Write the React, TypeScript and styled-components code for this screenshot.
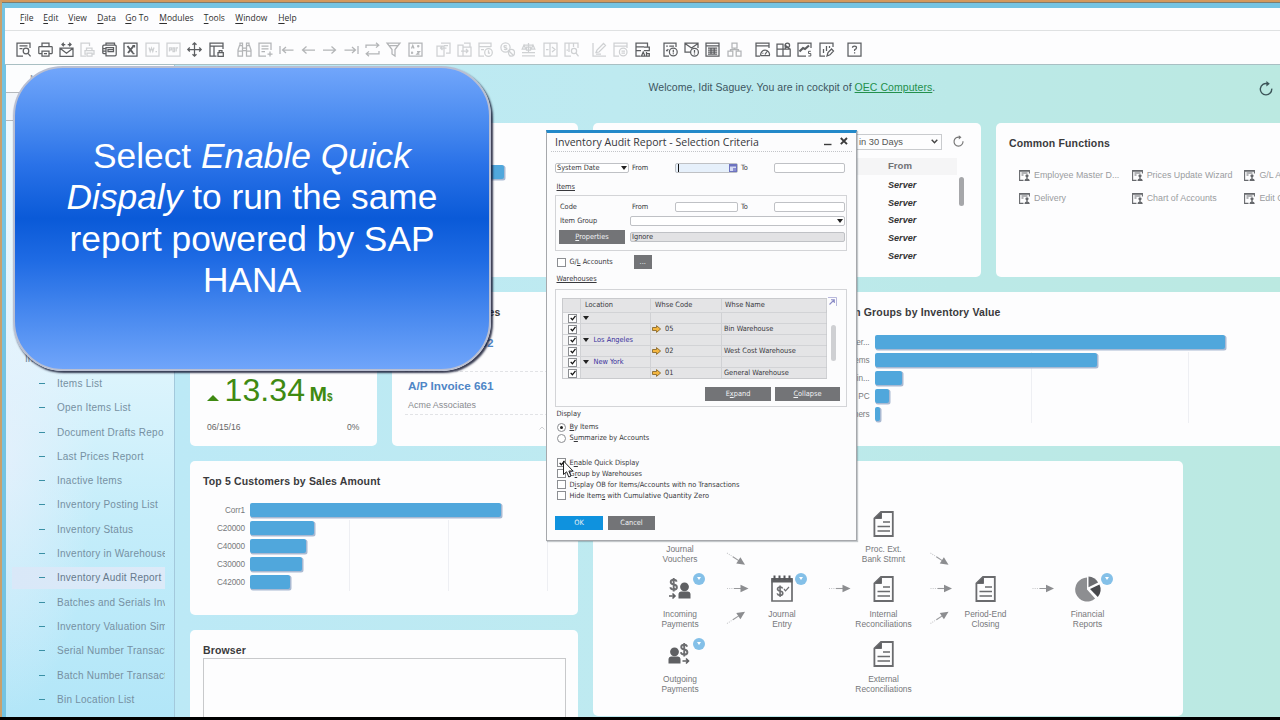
import React from "react";
import styled, { createGlobalStyle, css } from "styled-components";

const Global = createGlobalStyle`
  * { box-sizing: border-box; }
  body { margin: 0; background: #000; overflow: hidden; }
  #root { font-family: "Liberation Sans", Arial, sans-serif; }
`;

/* ---------- window frame ---------- */
const Screen = styled.div`
  position: relative; width: 1280px; height: 720px; overflow: hidden; background: #000;
`;
const OuterFrame = styled.div`
  height: 717px; border-top: 2px solid #d3985c; border-left: 2px solid #c9a06c;
`;
const InnerFrame = styled.div`
  height: 715px; border-top: 1px solid #7b7d70; background: #74c3e2;
  padding: 5px 0 0 4px; display: flex; flex-direction: column;
`;
const MenuBar = styled.nav`
  height: 23px; flex: none; background: #fdfdfe; border-bottom: 1px solid #dfe1e2;
  display: flex; align-items: center; padding-left: 15px; padding-bottom: 3px;
  margin-left: -1px;
  font: 8.5px "Open Sans", "Noto Sans", sans-serif; color: #2f2f2f;
`;
const MenuItem = styled.span<{ $w: number }>`width: ${p => p.$w}px; white-space: nowrap; flex: none; u { text-underline-offset: 1.5px; }`;
const ToolBar = styled.div`
  height: 34px; flex: none; background: #fdfdfe; border-bottom: 1px solid #a9bfc3;
  display: flex; align-items: center; padding: 4px 0 0 8px; gap: 6.5px; margin-left: -1px;
`;
const ToolGroup = styled.div`display: flex;`;
const Tool = styled.span<{ $tone: number }>`
  width: 21.4px; height: 16px; display: flex; align-items: center; justify-content: center;
  color: ${p => ["#5c5e61", "#b3b5b7", "#cfd1d3"][p.$tone]};
  svg { width: 15px; height: 15px; overflow: visible; }
`;
const Body = styled.div`flex: 1; min-height: 0; display: flex;`;

/* ---------- sidebar ---------- */
const Sidebar = styled.aside`
  width: 169px; flex: none; overflow: hidden; border-right: 1px solid #a3c9dc;
  background: radial-gradient(90px 260px at 0 390px, rgba(232,240,252,.75), transparent), linear-gradient(180deg, #f2fafe 0, #dff5fd 45%, #c4edfa 70%, #b2e6f8 100%);
`;
const SideHead = styled.div`
  height: 28px; background: #fcfdfe; border-bottom: 1px solid #b5b9bd; padding: 7px 0 0 24px;
  font-size: 9.5px; color: #8a93a3;
`;
const SideSearch = styled.div`height: 28px; background: #f3f6fa; border-bottom: 1px solid #b5b9bd;`;
const SideList = styled.div`padding: 226px 9px 0 6px;`;
const SideCategory = styled.div`
  height: 24.3px; line-height: 24.3px; padding-left: 13px; font-size: 10px; color: #6b8496;
`;
const SideItem = styled.div<{ $on?: boolean }>`
  height: 24.3px; display: flex; align-items: center; overflow: hidden; white-space: nowrap;
  font-size: 10px; letter-spacing: 0.25px; color: #7690a2;
  ${p => p.$on && css`background: linear-gradient(90deg, #d9e8f8, #dceaf8); background-size: 100% 22px; background-repeat: no-repeat; background-position: 0 1px; color: #66798c;`}
`;
const Dash = styled.span`width: 6px; height: 1px; margin: 0 12px 0 27px; flex: none; background: #3a90a5;`;

/* ---------- cockpit ---------- */
const Cockpit = styled.main`
  flex: 1; min-width: 0; overflow: hidden; padding-left: 15px;
  background: linear-gradient(90deg, #bce9f6 0, #beeaf0 40%, #bbe9e8 70%, #bbe9e1 100%);
`;
const Welcome = styled.header`
  height: 58px; display: flex; align-items: flex-start; padding: 16px 7px 0 458.5px;
  font-size: 10.5px; letter-spacing: 0.05px; line-height: 13px; color: #3c5560; white-space: nowrap;
  a { color: #23904c; text-decoration: underline; }
  svg { margin-left: auto; margin-top: 1px; width: 14px; height: 14px; color: #3d5559; overflow: visible; flex: none; }
`;
const Columns = styled.div`display: flex; gap: 15px;`;
const Column = styled.div<{ $w: number }>`width: ${p => p.$w}px; flex: none; display: flex; flex-direction: column; gap: 15px;`;
const CardRow = styled.div`display: flex; gap: 15px;`;
const Card = styled.section<{ $w: number; $h: number }>`
  width: ${p => p.$w}px; height: ${p => p.$h}px; flex: none; background: #fdfdfe; border-radius: 5px;
  padding: 14px 13px 0; overflow: hidden; position: relative;
`;
const CardTitle = styled.h2<{ $gap?: number }>`
  margin: 0 0 ${p => p.$gap ?? 0}px; font-size: 10.5px; line-height: 13px; min-height: 13px; letter-spacing: 0.15px; color: #3a3a3c; white-space: nowrap;
`;

/* ---------- bar charts ---------- */
const Chart = styled.div<{ $grid: number; $first: number }>`
  display: flex; flex-direction: column; gap: 3px; padding-bottom: 2px;
  background-image: ${p => [0, 1, 2].map(i => {
    const x = p.$first + i * p.$grid;
    return `linear-gradient(90deg, transparent ${x - 1}px, #eeeff3 ${x - 1}px, #eeeff3 ${x}px, transparent ${x}px)`;
  }).join(", ")};
  background-position: 0 18px; background-repeat: no-repeat;
`;
const BarLine = styled.div`display: flex; height: 15px; align-items: center;`;
const BarLabel = styled.span<{ $w: number }>`
  width: ${p => p.$w}px; padding: 1px 5px 0 0; text-align: right; font-size: 8.2px; letter-spacing: -0.1px; color: #77797c; white-space: nowrap;
`;
const Bar = styled.span`height: 14px; background: #50a7dc; border-radius: 2px; box-shadow: 1px 1px 0 0.5px #a9b9d2;`;

function BarChart({ label, first, grid, rows }: { label: number; first: number; grid: number; rows: [string, number][] }) {
  return (
    <Chart $first={first} $grid={grid}>
      {rows.map(([name, w], i) => (
        <BarLine key={i}>
          <BarLabel $w={label}>{name}</BarLabel>
          <Bar style={{ width: w }} />
        </BarLine>
      ))}
    </Chart>
  );
}

/* ---------- widgets ---------- */
const Kpi = styled.div`display: flex; align-items: baseline; margin: 53px 0 0 4px; height: 37px; line-height: 37px; color: #3f8a12;`;
const Up = styled.span`border: 6px solid transparent; border-top: 0; border-bottom: 6px solid #3f8a12; margin-right: 5.5px;`;
const KpiValue = styled.span`font-size: 32px; letter-spacing: 0.1px;`;
const KpiUnit = styled.b`font-size: 21px; margin-left: 4.5px;`;
const KpiCur = styled.b`font-size: 10px;`;
const KpiFoot = styled.div`display: flex; justify-content: space-between; padding: 12px 4px 0 4px; font-size: 8.6px; color: #666; line-height: 12px;`;

const Activity = styled.div`
  height: 43px; margin-right: -13px; border-bottom: 1px dashed #e2e3e6; padding: 7px 0 0 3.5px;
  b { display: block; font-size: 11.7px; line-height: 14px; color: #4f86c6; }
  small { display: block; font-size: 8.95px; line-height: 12px; margin-top: 6px; color: #8a8c90; }
`;
const MoreCaret = styled.svg`display: block; width: 6px; height: 4px; margin: 11px 0 0 134px;`;

const MsgHead = styled.div`
  display: flex; align-items: center; justify-content: flex-end; height: 15px; gap: 10.5px; margin-top: -3px; padding-right: 4.5px;
  svg { width: 11px; height: 11px; color: #777; overflow: visible; }
`;
const RangeSelect = styled.div`
  width: 120px; height: 16px; border: 1px solid #c9cbce; display: flex; align-items: center; justify-content: space-between;
  padding: 0 3px 0 36px; font-size: 9.3px; color: #555; white-space: nowrap;
  && svg { width: 7px; height: 5px; color: #444; }
`;
const MsgTable = styled.div`margin: 9px 11px 0 0; height: 110px; font-size: 9.8px; color: #333;`;
const MsgHeader = styled.div`height: 17px; line-height: 16px; background: #f5f5f6; padding-left: 282px; color: #717275; font-weight: bold; font-size: 9.6px;`;
const MsgRow = styled.div`height: 17.7px; line-height: 17.7px; padding: 2px 0 0 282px; font-weight: bold; font-style: italic; font-size: 9.1px;`;
const Thumb = styled.div<{ $x: number; $y: number; $w: number; $h: number; $c: string }>`
  position: absolute; left: ${p => p.$x}px; top: ${p => p.$y}px; width: ${p => p.$w}px; height: ${p => p.$h}px;
  border-radius: 3px; background: ${p => p.$c};
`;

const FnGrid = styled.div`display: grid; grid-template-columns: repeat(3, 112.7px); row-gap: 11px; padding-left: 10px; width: 360px;`;
const Fn = styled.div`
  height: 12px; display: flex; align-items: center; gap: 4px; font-size: 8.9px; color: #9a9ca0; white-space: nowrap;
  svg { width: 11px; height: 11px; flex: none; color: #66686c; margin-top: 2px; }
`;

const BrowserBox = styled.div`width: 363px; height: 90px; margin-top: 1px; border: 1px solid #c8c9cb;`;

/* ---------- process map ---------- */
const Node = styled.div<{ $x: number; $y: number }>`
  position: absolute; left: ${p => p.$x - 593 - 40}px; top: ${p => p.$y - 462 - 15.5}px; width: 80px;
  display: flex; flex-direction: column; align-items: center; text-align: center;
  font-size: 8.4px; line-height: 10.2px; color: #77787b;
  svg { height: 32px; width: 32px; margin-bottom: 4.5px; }
`;
const Badge = styled.span`
  position: absolute; left: 53px; top: 0; width: 12px; height: 12px; border-radius: 50%; background: #84c0e8;
  display: flex; align-items: center; justify-content: center;
  &::after { content: ""; border: 2.5px solid transparent; border-bottom: 0; border-top: 3px solid #fff; }
`;
const Links = styled.svg`position: absolute; left: 0; top: 0; width: 590px; height: 255px;`;

/* ---------- callout ---------- */
const Callout = styled.div`
  position: absolute; left: 13px; top: 66px; width: 478px; height: 305px; border-radius: 50px;
  border: 2px solid #b9bfd2; box-shadow: 1.5px 2px 2px rgba(20, 25, 50, .85);
  background: linear-gradient(180deg, #71a6fb 0, #4a8bf0 18%, #2a72e8 32%, #0a5ad8 50%, #1f6be4 64%, #4486ee 80%, #70a5fa 100%);
  display: flex; align-items: center; justify-content: center; text-align: center; padding: 0 40px 2px;
  color: #fff; font-size: 35.3px; line-height: 41.2px;
`;

/* ---------- dialog ---------- */
const Dialog = styled.div`
  position: absolute; left: 546px; top: 130px; width: 311px; height: 411px; background: #fcfcfd;
  border: 1px solid #a6a8ac; border-top: 3px solid #2389c9; box-shadow: 1px 1px 1px rgba(90,100,110,.35);
  font: 7.35px/10px "DejaVu Sans Condensed", "DejaVu Sans", sans-serif; color: #38383c;
  padding: 0 9px 0 8px; white-space: nowrap;
  u { text-underline-offset: 1px; }
`;
const DialogTitle = styled.div`
  height: 19px; margin: 0 -5px 0 -4px; padding: 0 4px 1px; border-bottom: 1px dotted #c2c4c8; display: flex; align-items: center;
  font: 10.55px "Open Sans", "Noto Sans", sans-serif; color: #36363a;
  svg { margin-left: auto; width: 24px; height: 12px; margin-right: 0; margin-top: -2px; color: #3c3c3c; }
`;
const Row = styled.div<{ $h?: number; $mt?: number }>`display: flex; align-items: center; height: ${p => p.$h ?? 10}px; margin-top: ${p => p.$mt ?? 0}px;`;
const Cell = styled.span<{ $w: number; $ml?: number }>`width: ${p => p.$w}px; margin-left: ${p => p.$ml ?? 0}px; flex: none;`;
const Input = styled.span<{ $w: number; $active?: boolean; $off?: boolean; $ml?: number }>`
  width: ${p => p.$w}px; height: 10px; margin-left: ${p => p.$ml ?? 0}px; flex: none; border: 1px solid #bfc1c5; border-radius: 2px;
  background: ${p => (p.$active ? "#e6f0fb" : p.$off ? "#e2e2e4" : "#fff")};
  display: flex; align-items: center; justify-content: space-between; line-height: 8px; padding-left: 1px;
  svg { width: 8px; height: 8px; }
`;
const Caret = styled.i`width: 1px; height: 8px; background: #111; margin-left: 1px;`;
const Down = styled.i<{ $mr?: number }>`border: 3px solid transparent; border-bottom: 0; border-top: 4px solid #222; margin-right: ${p => p.$mr ?? 1}px; flex: none;`;
const Section = styled.div<{ $mt: number }>`height: 10px; margin: ${p => p.$mt}px 0 0 1.5px;`;
const Group = styled.div<{ $h: number; $mt: number; $pad: string }>`
  height: ${p => p.$h}px; margin-top: ${p => p.$mt}px; padding: ${p => p.$pad}; border: 1px solid #d3d4d7; position: relative;
`;
const Button = styled.span<{ $w: number; $h?: number; $ml?: number; $primary?: boolean }>`
  width: ${p => p.$w}px; height: ${p => p.$h ?? 14}px; margin-left: ${p => p.$ml ?? 0}px; flex: none;
  background: ${p => (p.$primary ? "#0f92de" : "#737477")}; color: #f1f3f5;
  display: flex; align-items: center; justify-content: center; padding-bottom: 1px;
`;
const Box = styled.span<{ $ml?: number }>`
  width: 9px; height: 9px; border: 1px solid #8c8e92; background: #fff; flex: none; margin-left: ${p => p.$ml ?? 2}px;
  display: flex; align-items: center; justify-content: center;
  svg { width: 6px; height: 6px; flex: none; margin: 0; }
`;
const Radio = styled.span<{ $on?: boolean }>`
  width: 9px; height: 9px; border: 1px solid #8c8e92; border-radius: 50%; background: #fff; flex: none; margin-left: 2px;
  display: flex; align-items: center; justify-content: center;
  &::after { content: ""; width: 3px; height: 3px; border-radius: 50%; background: ${p => (p.$on ? "#222" : "transparent")}; }
`;
const Label = styled.span`margin-left: 3.5px;`;
const Grid = styled.div`width: 265px; height: 81px; border: 1px solid #c9cacd; background: #e4e4e6;`;
const GridRow = styled.div<{ $head?: boolean }>`
  display: grid; grid-template-columns: 18px 70px 71px 105px; height: ${p => (p.$head ? 13 : 11)}px;
  ${p => p.$head && css`padding-bottom: 2px;`}
  ${p => !p.$head && css`border-top: 1px solid #d2d3d6;`}
`;
const Td = styled.span<{ $pl?: number; $white?: boolean; $link?: boolean }>`
  display: flex; align-items: center; border-right: 1px solid #d0d1d4; padding-left: ${p => p.$pl ?? 0}px;
  ${p => p.$white && css`background: #f7f7f8;`}
  ${p => p.$link && css`color: #39319c;`}
`;
const CodeArrow = styled.svg`width: 9px; height: 8px; margin-right: 4px; flex: none;`;
const Corner = styled.svg`position: absolute; left: 272px; top: 7px; width: 9px; height: 9px;`;
const Cursor = styled.svg`position: absolute; left: 562px; top: 460px; width: 13px; height: 19px;`;

/* ---------- icons ---------- */
const S = { fill: "none", stroke: "currentColor", strokeWidth: 1.25 } as const;
const Ico = ({ d, children }: { d: string; children?: React.ReactNode }) => (
  <svg viewBox="0 0 15 15" {...S}><path d={d} />{children}</svg>
);
const box = "M1 1H14V14H1Z";
const Check = () => <svg viewBox="0 0 7 7"><path d="M.8 3.4L2.8 5.6L6.4 1" fill="none" stroke="#111" strokeWidth="1.5" /></svg>;
const Reload = ({ w = 1.4 }: { w?: number }) => (
  <svg viewBox="0 0 14 14" fill="none" stroke="currentColor" strokeWidth={w}>
    <path d="M8.6 1.7A5.7 5.7 0 1 0 12.7 6.6" /><path d="M7.4 -1L10.8 1.7L7.4 4.4Z" fill="currentColor" stroke="none" />
  </svg>
);
const FnIcon = () => (
  <svg viewBox="0 0 11 11" fill="none" stroke="currentColor" strokeWidth="1.1">
    <path d="M10.4 3.5V.6H.6V10.4H4.5M2.5 3H8.5M2.5 5H4.5M.6 1.2H10.4" />
    <circle cx="8" cy="5.8" r="1.6" fill="currentColor" stroke="none" /><path d="M5.4 10.9Q5.6 9 7.4 8.6V7H8.6V8.6Q10.6 9 10.8 10.9Z" fill="currentColor" stroke="none" />
  </svg>
);

const toolGroups: [number, React.ReactNode][][] = [
  [
    [0, <Ico d="M14 6V1H1V14H7M3.5 3.8H11.5M3.5 6.5H6.5"><circle cx="10" cy="9" r="2.8" /><path d="M12 11.3L14.6 14.4" /></Ico>],
    [0, <Ico d="M4 4.5V1H11V4.5M4 11.5H1.2Q.8 11.5 .8 11V5.2Q.8 4.5 1.5 4.5H13.5Q14.2 4.5 14.2 5.2V11Q14.2 11.5 13.8 11.5H11M4 9H11V14.2H4ZM6 11.5H9" />],
    [0, <Ico d="M1 6H14V14.3H1ZM1 6.2L7.5 11.2L14 6.2M3 2.5H6.3M8.7 2.5H12M4.8 .8L3 2.5L4.8 4.2M10.2 .8L12 2.5L10.2 4.2" />],
    [2, <Ico d="M6 14H1V1H9.5V4M6.5 8.5V6H12V8.5M6 12H5V8.5H14V12H12M7 11H12V14H7Z" />],
    [0, <Ico d="M4 3V1H12.5V3M3.5 11.5H1.8Q.8 11.5 .8 10.5V4.2Q.8 3.2 1.8 3.2H13.2Q14.2 3.2 14.2 4.2V12.5Q14.2 13.8 13 13.8H4V5.5H11.5V9.5H6V7.5H11.5M1 6.5H4M1 9H4" />],
    [0, <Ico d={box}><path d="M4.5 4L10 11M10.5 4L5 11" strokeWidth="2" /><path d="M9.5 3.5H11.5V5.5M9.5 11.5H11.5" /></Ico>],
    [2, <Ico d={box + "M4 5.5L5.2 9.5L6.5 6L7.8 9.5L9 5.5M10.5 9.5H12"} />],
    [2, <Ico d={box + "M3.5 9.5V5.8H5.5V7.8H3.5M7 5.8V9.5H8.5V5.8ZM10.2 9.5V5.8H12"} />],
    [0, <Ico d="M7.5 .8V14.2M.8 7.5H14.2M5.5 2.8L7.5 .8L9.5 2.8M5.5 12.2L7.5 14.2L9.5 12.2M2.8 5.5L.8 7.5L2.8 9.5M12.2 5.5L14.2 7.5L12.2 9.5" />],
    [0, <Ico d="M14 7V1H1V14H7.5M1 4H14M5 4V14M9 10.5H14.3V14.3H9ZM10.2 10.5V8.5H13V10.5" />],
  ],
  [
    [1, <Ico d="M1 8L2.5 3.5H5.5V14H1ZM14 8L12.5 3.5H9.5V14H14ZM3 3.5V1H5.5V3.5M12 3.5V1H9.5V3.5M5.5 6H9.5M5.5 8.5H9.5M1 9H5.5M9.5 9H14" />],
    [1, <Ico d="M13 8V1H1V14H8M3.5 4H10.5M3.5 6.8H10.5M3.5 9.5H7M12 9.5V14.5M9.5 12H14.5" />],
    [1, <Ico d="M1 4V12M3.5 8H14.5M7 5L3.5 8L7 11" />],
    [1, <Ico d="M1.5 8H14M5.5 4.6L1.5 8L5.5 11.4" />],
    [1, <Ico d="M1 8H13.5M9.5 4.6L13.5 8L9.5 11.4" />],
    [1, <Ico d="M14 4V12M.5 8H11.5M8 5L11.5 8L8 11" />],
    [1, <Ico d="M1 6V3.2H13.5M11 .8L13.8 3.2L11 5.6M14 9V11.8H1.5M4 9.4L1.2 11.8L4 14.2" />],
    [1, <Ico d="M1 1H14L9 7.5V14L6 12V7.5ZM3.5 3.5H11.5" />],
    [1, <Ico d={box + "M3.5 6.5L4.8 3.5L6 6.5M9 4H11.5M10.2 3V5.5M4 9.5V12M3 10.8H5.2M9 9.5H11.5L9 12H11.5"} />],
  ],
  [
    [2, <Ico d="M5 1H14V11H10M1 4H8V14H1ZM10.5 6H4.5M6.5 4L4.5 6L6.5 8M8 3.5H12" />],
    [2, <Ico d="M1 3H6V14H1ZM6 5H14V14H6ZM7 1H13V5M4 9H11M9 7L11 9L9 11" />],
    [2, <Ico d="M13 5V1H1V14H6M1 4.5H13M3 7.5H6"><circle cx="10.5" cy="10.5" r="3.8" /><path d="M10.5 8.3V11H12" /></Ico>],
    [2, <Ico d="M8 8L13.5 13.5"><circle cx="5.5" cy="5.5" r="4.6" /><ellipse cx="11.5" cy="10.8" rx="3" ry="3.4" /><path d="M7 4Q4 3 4 4.5Q4 5.5 5.5 5.5Q7 6 7 7Q5.5 8 4 7" /></Ico>],
    [2, <Ico d="M1 13.8H14M1 10.5H14M7.5 1V10M3 3H12M3 3L1.2 7H4.8ZM12 3L10.2 7H13.8ZM5.5 5H9.5V8H5.5Z" />],
    [2, <Ico d="M1 1H7V14H1ZM7 1H14V14H7ZM3 7.5H5.5M9 5L12 7.5L9 10" />],
    [2, <Ico d="M14 6V1H1V14H7M5 1V10M9.5 1V5M2.5 8H4"><circle cx="10" cy="9" r="2.6" /><path d="M12 11L14.5 14.3" /></Ico>],
  ],
  [
    [2, <Ico d="M1 1V14H14M4 10.5L5 8L11.5 1.5L13.5 3.5L7 10ZM4 12H9" />],
    [2, <Ico d="M14 6V1H1V14H6M1 4H14"><circle cx="10.2" cy="10" r="3.8" /><path d="M8.5 9H12M8.5 11H12" /></Ico>],
    [0, <Ico d="M12.5 5V1H1V14H5.5M1 4.8H9M1 8.6H6M9 5H14.3V8.6H9M6.5 14L8.2 10L10 14ZM11.5 10V14H14.3V11.5H11.5" />],
  ],
  [
    [0, <Ico d="M13 5V1H1V14H6M3.2 4.2H4.8M6.3 4.2H11M3.2 8L4 8.8L5.3 7.2"><circle cx="10.3" cy="10" r="3.9" /><path d="M10.3 7.8V10.5M10.3 11.2V12.3" /></Ico>],
    [0, <Ico d="M14 6V1H1V10H6M1 1.5L7.5 6L14 1.5"><circle cx="10.5" cy="10.3" r="3.9" /><path d="M10.5 8V10.8M10.5 11.4V12.5" /></Ico>],
    [0, <Ico d="M1 1.2H14V14H1ZM1 3.8H14M3 6.2H12.2M3 8.2H12.2M3 10.2H12.2M3 12.2H12.2M6 5.4V12.6M9.2 5.4V12.6" />],
    [1, <Ico d="M5 1H10V6H5ZM1 9.2H5.8V14H1ZM9.2 9.2H14V14H9.2ZM7.5 6V7.5M3.5 9V7.6H11.5V9" />],
  ],
  [
    [0, <Ico d="M14 6V1H1V14H5M1 3.8H14"><path d="M5.8 13.5A4.4 4.4 0 1 1 14.4 13.5ZM10 12.5L12 9.5M7.5 11L8.3 11.5" /></Ico>],
    [0, <Ico d="M1 2.2H7V14H1ZM1 7.2H14.2V14H7V7.2M9.3 7V2.5M9.3 3.2L13.6 6.8"><circle cx="11.4" cy="3.2" r="2.2" /></Ico>],
    [0, <Ico d="M14 6V1H1V14H9"><path d="M2.5 9.5L6 6L8 7L12 3.5" strokeWidth="2.2" /><path d="M13.8 9.3H11.5V11.5H13.8V14H11.3" strokeWidth="1" /></Ico>],
    [0, <Ico d="M14 5V1H1V14H6M4.5 11V7M7.5 9V4M10.5 6V4M8 14L9 10.5L12.5 7L14.5 9L11 12.8Z" />],
  ],
  [[0, <Ico d={box + "M5.5 5.8Q5.5 4 7.5 4Q9.5 4 9.5 5.7Q9.5 6.8 7.6 7.8V9M7.6 10.2V11.5"} />]],
];

const DocIcon = () => (
  <svg viewBox="0 0 32 32" fill="none" stroke="#6a6b6e" strokeWidth="1.8">
    <path d="M13 4H24.8V28H6.4V10.5Z" /><path d="M13.5 4V10.5H6.5Z" fill="#5f6063" strokeWidth="1" />
    <path d="M15 14H22M9.5 18.5H22M9.5 23H22" strokeWidth="1.7" />
  </svg>
);
const Person = ({ x }: { x: number }) => (
  <g transform={`translate(${x} 0)`} fill="#5f6063"><circle cx="6" cy="13.8" r="4.4" /><path d="M0 25.5V21.5Q0 18.6 3 18.6H9Q12 18.6 12 21.5V25.5Z" /></g>
);
const Dollar = ({ x, y, s = 1 }: { x: number; y: number; s?: number }) => (
  <path transform={`translate(${x} ${y}) scale(${s})`} fill="none" stroke="#6d6e71" strokeWidth="1.9"
    d="M7.2 3.6Q6.6 1.8 4.2 1.8Q1.2 1.8 1.2 4.1Q1.2 6 4.2 6.5Q7.4 7.1 7.4 9.2Q7.4 11.6 4.2 11.6Q1.4 11.6 .8 9.3M4.2 0V13.4" />
);
const Incoming = () => <svg viewBox="0 0 32 32"><Dollar x={5.5} y={5} /><Person x={14.5} /><path d="M5 23H11M8.5 20.5L11 23L8.5 25.5" fill="none" stroke="#5f6063" strokeWidth="1.6" /></svg>;
const Outgoing = () => <svg viewBox="0 0 32 32"><Person x={4.5} /><Dollar x={16} y={5} /><path d="M18.5 23H24.5M22 20.5L24.5 23L22 25.5" fill="none" stroke="#5f6063" strokeWidth="1.6" /></svg>;
const Journal = () => (
  <svg viewBox="0 0 32 32"><path d="M6 6H26V28H6Z" fill="none" stroke="#6a6b6e" strokeWidth="1.7" /><path d="M5.5 5H26.5V9.5H5.5Z" fill="#5f6063" />
    <path d="M8.5 2.5V7M13.5 2.5V7M18.5 2.5V7M23.5 2.5V7" stroke="#55565a" strokeWidth="2" /><Dollar x={10.5} y={12.5} s={0.85} /><path d="M18 16L19.5 17.8L23 14" fill="none" stroke="#6d6e71" strokeWidth="1.2" /></svg>
);
const Pie = () => (
  <svg viewBox="0 0 32 32"><path d="M15 4.5A12 12 0 1 0 23.1 25.5L15 16.5Z" fill="#8d8e91" /><path d="M16.5 3.5A12 12 0 0 1 26.1 9.5L16.5 14.3Z" fill="#6b6c70" /><path d="M27.5 11.5A12 12 0 0 1 25.8 24L18 16Z" fill="#47484c" /></svg>
);

const nodes: [number, number, string[], React.ReactNode, boolean][] = [
  [680, 524, ["Journal", "Vouchers"], <DocIcon />, false],
  [883.5, 524, ["Proc. Ext.", "Bank Stmnt"], <DocIcon />, false],
  [680, 589, ["Incoming", "Payments"], <Incoming />, true],
  [782, 589, ["Journal", "Entry"], <Journal />, true],
  [883.5, 589, ["Internal", "Reconciliations"], <DocIcon />, false],
  [985.5, 589, ["Period-End", "Closing"], <DocIcon />, false],
  [1087.5, 589, ["Financial", "Reports"], <Pie />, true],
  [680, 654, ["Outgoing", "Payments"], <Outgoing />, true],
  [883.5, 654, ["External", "Reconciliations"], <DocIcon />, false],
];
const arrows: [number, number, number][] = [
  [727, 554, 33], [727, 589.5, 0], [727, 624.5, -33],
  [829, 589.5, 0],
  [930.5, 554, 33], [930.5, 589.5, 0], [930.5, 624.5, -33],
  [1032.5, 589.5, 0],
];

const menus: [string, string, number][] = [
  ["F", "ile", 23.3], ["E", "dit", 25], ["V", "iew", 29], ["D", "ata", 28], ["G", "o To", 34], ["M", "odules", 44.5], ["T", "ools", 31.5], ["W", "indow", 43], ["H", "elp", 30],
];
const reports = ["Items List", "Open Items List", "Document Drafts Repo", "Last Prices Report", "Inactive Items", "Inventory Posting List", "Inventory Status", "Inventory in Warehouse", "Inventory Audit Report", "Batches and Serials Inv", "Inventory Valuation Sim", "Serial Number Transact", "Batch Number Transact", "Bin Location List"];
const functions = ["Employee Master D...", "Prices Update Wizard", "G/L Account", "Delivery", "Chart of Accounts", "Edit Chart"];
const warehouses: { loc?: string; code?: string; name?: string }[] = [
  { loc: "" }, { code: "05", name: "Bin Warehouse" }, { loc: "Los Angeles" }, { code: "02", name: "West Cost Warehouse" }, { loc: "New York" }, { code: "01", name: "General Warehouse" },
];

function SelectionDialog() {
  return (
    <Dialog>
      <DialogTitle>
        Inventory Audit Report - Selection Criteria
        <svg viewBox="0 0 24 12" fill="none" stroke="currentColor"><path d="M0 9.5H7.5" strokeWidth="1.4" /><path d="M16.8 3L23 9.2M23 3L16.8 9.2" strokeWidth="1.9" /></svg>
      </DialogTitle>
      <Row $mt={11}>
        <Input $w={74}>System Date<Down $mr={1} /></Input>
        <Cell $w={43} $ml={3}>From</Cell>
        <Input $w={63} $active><Caret /><svg viewBox="0 0 8 8"><path d="M0 0H8V8H0Z" fill="#6d73bf" /><path d="M1 2.5H7V7H1Z" fill="#d5daf4" /><path d="M4 4H7V7H4Z" fill="#8a8fd0" /></svg></Input>
        <Cell $w={33} $ml={3}>To</Cell>
        <Input $w={71} />
      </Row>
      <Section $mt={9}><u>Items</u></Section>
      <Group $h={56} $mt={3} $pad="6px 0 0 4px">
        <Row><Cell $w={72}>Code</Cell><Cell $w={43}>From</Cell><Input $w={63} /><Cell $w={33} $ml={3}>To</Cell><Input $w={71} /></Row>
        <Row $mt={4}><Cell $w={70}>Item Group</Cell><Input $w={215}><span /><Down $mr={1} /></Input></Row>
        <Row $mt={4} $h={14}><Button $w={66} $ml={-1}><span><u>P</u>roperties</span></Button><Input $w={215} $ml={5} $off>Ignore</Input></Row>
      </Group>
      <Row $mt={4} $h={14}><Box /><Label><Cell $w={65}>G/<u>L</u> Accounts</Cell></Label><Button $w={18} $ml={21}>...</Button></Row>
      <Section $mt={5}><u>Warehouses</u></Section>
      <Group $h={118} $mt={5} $pad="8px 0 0 6px">
        <Grid>
          <GridRow $head><Td /><Td $pl={4}>Location</Td><Td $pl={4}>Whse Code</Td><Td $pl={3}>Whse Name</Td></GridRow>
          {warehouses.map((w, i) => (
            <GridRow key={i}>
              <Td $white $pl={5}><Box $ml={0}><Check /></Box></Td>
              <Td $link $pl={2}>{w.loc !== undefined && <><Down $mr={4.5} />{w.loc}</>}</Td>
              <Td $pl={1}>{w.code && <><CodeArrow viewBox="0 0 9 8"><path d="M.5 2.5H4.5V.6L8.6 4L4.5 7.4V5.5H.5Z" fill="#f4b63f" stroke="#8b6a2c" strokeWidth=".9" /></CodeArrow>{w.code}</>}</Td>
              <Td $pl={2}>{w.name}</Td>
            </GridRow>
          ))}
        </Grid>
        <Corner viewBox="0 0 9 9" fill="none" stroke="#8a8bc6"><path d="M0 .5H8.5V9" strokeWidth="1" opacity=".6" /><path d="M1.5 7.5L6 3M3 2.8H6.3V6" strokeWidth="1.1" /></Corner>
        <Thumb $x={275} $y={35} $w={5} $h={36} $c="#cfd0d3" />
        <Row $mt={8} $h={14}><Button $w={66} $ml={143}><span>E<u>x</u>pand</span></Button><Button $w={65} $ml={4}><span><u>C</u>ollapse</span></Button></Row>
      </Group>
      <Section $mt={2}>Display</Section>
      <Row $mt={2.5} $h={11}><Radio $on /><Label><u>B</u>y Items</Label></Row>
      <Row $h={11}><Radio /><Label>S<u>u</u>mmarize by Accounts</Label></Row>
      <Row $mt={13.5} $h={11}><Box><Check /></Box><Label>E<u>n</u>able Quick Display</Label></Row>
      <Row $h={11}><Box /><Label>G<u>r</u>oup by Warehouses</Label></Row>
      <Row $h={11}><Box /><Label>D<u>i</u>splay OB for Items/Accounts with no Transactions</Label></Row>
      <Row $h={11}><Box /><Label>Hide Item<u>s</u> with Cumulative Quantity Zero</Label></Row>
      <Row $mt={15} $h={14}><Button $w={48} $primary>OK</Button><Button $w={47} $ml={5}>Cancel</Button></Row>
    </Dialog>
  );
}

export default function App() {
  return (
    <Screen>
      <Global />
      <OuterFrame>
        <InnerFrame>
          <MenuBar>{menus.map(([a, b, w]) => <MenuItem key={b} $w={w}><u>{a}</u>{b}</MenuItem>)}</MenuBar>
          <ToolBar>
            {toolGroups.map((g, i) => <ToolGroup key={i}>{g.map(([tone, icon], j) => <Tool key={j} $tone={tone}>{icon}</Tool>)}</ToolGroup>)}
          </ToolBar>
          <Body>
            <Sidebar>
              <SideHead>Modules</SideHead>
              <SideSearch />
              <SideList>
                <SideCategory>Inventory Reports</SideCategory>
                {reports.map(r => <SideItem key={r} $on={r === "Inventory Audit Report"}><Dash />{r}</SideItem>)}
              </SideList>
            </Sidebar>
            <Cockpit>
              <Welcome><span>Welcome, Idit Saguey. You are in cockpit of <a>OEC Computers</a>.</span><Reload /></Welcome>
              <Columns>
                <Column $w={388}>
                  <Card $w={388} $h={154}>
                    <CardTitle $gap={14} />
                    <BarChart label={47} first={147} grid={99} rows={[["", 254]]} />
                  </Card>
                  <CardRow>
                    <Card $w={186.5} $h={154}>
                      <CardTitle />
                      <Kpi><Up /><KpiValue>13.34</KpiValue><KpiUnit>M</KpiUnit><KpiCur>$</KpiCur></Kpi>
                      <KpiFoot><span>06/15/16</span><span>0%</span></KpiFoot>
                    </Card>
                    <Card $w={186.5} $h={154}>
                      <CardTitle $gap={10}>Recent A/P Entries</CardTitle>
                      <Activity><b>A/P Invoice 662</b></Activity>
                      <Activity><b>A/P Invoice 661</b><small>Acme Associates</small></Activity>
                      <MoreCaret viewBox="0 0 6 4" fill="none" stroke="#cfd0d3"><path d="M.5 3.5L3 1L5.5 3.5" /></MoreCaret>
                    </Card>
                  </CardRow>
                  <Card $w={388} $h={154}>
                    <CardTitle $gap={14}>Top 5 Customers by Sales Amount</CardTitle>
                    <BarChart label={47} first={147} grid={99} rows={[["Corr1", 251], ["C20000", 64], ["C40000", 56], ["C30000", 52], ["C42000", 40]]} />
                  </Card>
                  <Card $w={388} $h={120}>
                    <CardTitle>Browser</CardTitle>
                    <BrowserBox />
                  </Card>
                </Column>
                <Column $w={720}>
                  <CardRow>
                    <Card $w={388} $h={154}>
                      <MsgHead>
                        <RangeSelect>in 30 Days<svg viewBox="0 0 7 5" fill="none" stroke="currentColor" strokeWidth="1.4"><path d="M.7 .8L3.5 3.8L6.3 .8" /></svg></RangeSelect>
                        <Reload w={1.5} />
                      </MsgHead>
                      <MsgTable>
                        <MsgHeader>From</MsgHeader>
                        {[0, 1, 2, 3, 4].map(i => <MsgRow key={i}>Server</MsgRow>)}
                      </MsgTable>
                      <Thumb $x={366} $y={54} $w={5} $h={29} $c="#a6a7aa" />
                    </Card>
                    <Card $w={388} $h={154}>
                      <CardTitle $gap={18.5}>Common Functions</CardTitle>
                      <FnGrid>{functions.map(f => <Fn key={f}><FnIcon />{f}</Fn>)}</FnGrid>
                    </Card>
                  </CardRow>
                  <CardRow>
                    <Card $w={186.5} $h={154} />
                    <Card $w={590} $h={154}>
                      <CardTitle $gap={15}>Top 5 Item Groups by Inventory Value</CardTitle>
                      <BarChart label={67} first={224} grid={157} rows={[["Printer...", 350.5], ["Items", 222.5], ["Main...", 27.5], ["PC", 14.5], ["Others", 5]]} />
                    </Card>
                  </CardRow>
                  <Card $w={590} $h={255}>
                    <Links viewBox="593 462 590 255" fill="none">
                      {arrows.map(([x, y, a], i) => (
                        <g key={i} transform={`translate(${x} ${y}) rotate(${a})`}>
                          <path d="M0 0H7" stroke="#c3c4c7" strokeDasharray="1 1.2" strokeWidth="1" />
                          <path d="M7 0H14" stroke="#98999c" strokeWidth="1.1" /><path d="M13.5 -3.8L21.5 0L13.5 3.8Z" fill="#8c8d90" />
                        </g>
                      ))}
                    </Links>
                    {nodes.map(([x, y, label, icon, badge], i) => (
                      <Node key={i} $x={x} $y={y}>{icon}{label.map(l => <span key={l}>{l}</span>)}{badge && <Badge />}</Node>
                    ))}
                  </Card>
                </Column>
              </Columns>
            </Cockpit>
          </Body>
        </InnerFrame>
      </OuterFrame>
      <SelectionDialog />
      <Callout><div>Select <i>Enable Quick Dispaly</i> to run the same report powered by SAP HANA</div></Callout>
      <Cursor viewBox="0 0 13 19"><path d="M1.5 1V14.5L4.6 11.8L6.8 17L9 16L6.9 11H11Z" fill="#fff" stroke="#222" strokeWidth="1" /></Cursor>
    </Screen>
  );
}
